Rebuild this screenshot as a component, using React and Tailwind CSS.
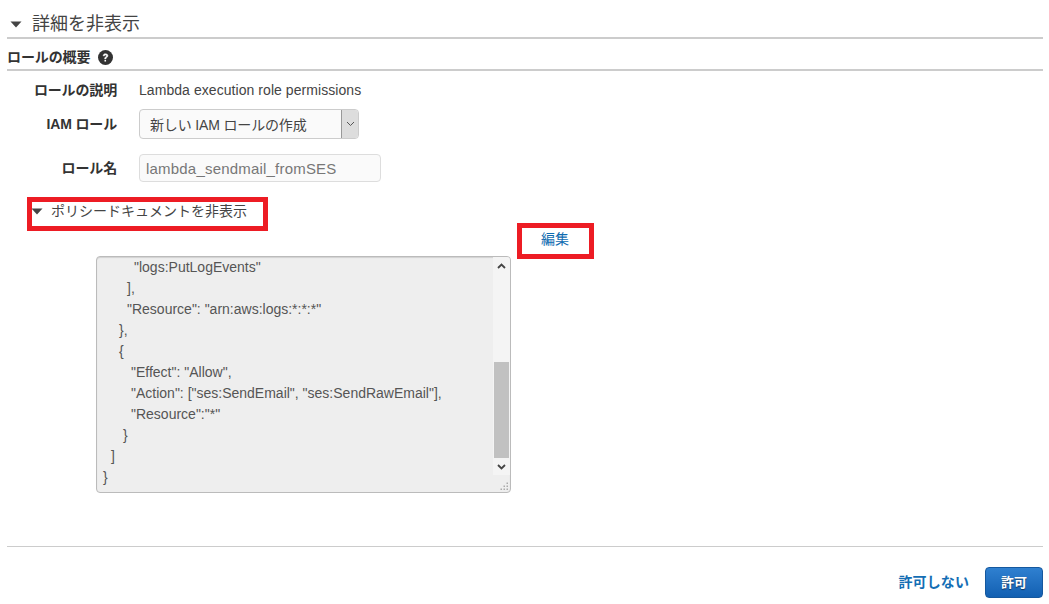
import React from "react";

function Caret({ className }) {
  return (
    <svg viewBox="0 0 12 7" className={className} aria-hidden="true">
      <path d="M0.5 0.5H11.5L6 6.5Z" fill="#444" />
    </svg>
  );
}

function Chevron({ up }) {
  return (
    <svg viewBox="0 0 9 6" className="w-[9px] h-[6px]" aria-hidden="true">
      <path d={up ? "M1 5L4.5 1.5L8 5" : "M1 1L4.5 4.5L8 1"} fill="none" stroke="#444" strokeWidth="1.8" />
    </svg>
  );
}

const lines = [
  ['pl-[31px]', '"logs:PutLogEvents"'],
  ['pl-[24px]', '],'],
  ['pl-[24px]', '"Resource": "arn:aws:logs:*:*:*"'],
  ['pl-[16px]', '},'],
  ['pl-[16px]', '{'],
  ['pl-[28px]', '"Effect": "Allow",'],
  ['pl-[28px]', '"Action": ["ses:SendEmail", "ses:SendRawEmail"],'],
  ['pl-[28px]', '"Resource":"*"'],
  ['pl-[20px]', '}'],
  ['pl-[8px]', ']'],
  ['pl-0', '}'],
];

function Row({ label, children, className }) {
  return (
    <div className={`flex items-center ${className}`}>
      <div className="w-[110px] text-right font-bold text-[14px] text-[#333] tracking-[-0.15px] shrink-0">{label}</div>
      <div className="ml-[22px]">{children}</div>
    </div>
  );
}

export default function App() {
  return (
    <div className="relative w-[1049px] h-[604px] overflow-hidden bg-white pl-[7px] pr-[6px] text-[#444] font-['Liberation_Sans','Noto_Sans_CJK_JP',sans-serif]">
      <div className="flex items-center box-content h-[25px] pt-[12px] border-b-2 border-[#ccc]">
        <Caret className="w-[12px] h-[7px] ml-[3px]" />
        <span className="ml-[10px] text-[18px] leading-[25px] text-[#444]">詳細を非表示</span>
      </div>
      <div className="flex items-center h-[24px] pt-[6px] border-b-2 border-[#ccc] box-content">
        <span className="font-bold text-[14px] text-[#333] tracking-[-0.1px]">ロールの概要</span>
        <svg viewBox="0 0 16 16" className="w-[15px] h-[15px] ml-[8px] mt-[1px]" aria-hidden="true">
          <circle cx="8" cy="8" r="8" fill="#333" />
          <path d="M5.4 6.2C5.5 4.7 6.6 4 8 4c1.5 0 2.6.8 2.6 2.1 0 1.9-2.2 1.9-2.2 3.4H7C7 7.4 9 7.4 9 6.2 9 5.6 8.6 5.3 8 5.3c-.7 0-1.1.4-1.2 1z" fill="#fff" stroke="#fff" strokeWidth=".5" />
          <rect x="6.9" y="10.6" width="1.7" height="1.7" fill="#fff" />
        </svg>
      </div>

      <Row label="ロールの説明" className="mt-[9px] h-[20px]">
        <span className="text-[14px] text-[#444] tracking-[0.06px]">Lambda execution role permissions</span>
      </Row>
      <Row label="IAM ロール" className="mt-[9px] h-[30px]">
        <div className="flex w-[220px] h-[30px] rounded-[4px] border border-[#ccc] overflow-hidden bg-[#fafafa]">
          <span className="flex-1 pl-[10px] text-[14px] leading-[31px] text-[#444] tracking-[-0.15px]">新しい IAM ロールの作成</span>
          <span className="w-[17px] flex items-center justify-center bg-[#ddd] border-l border-[#999]">
            <svg viewBox="0 0 9 6" className="w-[9px] h-[6px]" aria-hidden="true"><path d="M1 1L4.5 4.5L8 1" fill="none" stroke="#555" strokeWidth="1" /></svg>
          </span>
        </div>
      </Row>
      <Row label="ロール名" className="mt-[15px] h-[28px]">
        <div className="w-[242px] h-[28px] rounded-[4px] border border-[#ddd] bg-[#fafafa] pl-[6px] text-[15px] leading-[28px] text-[#777] tracking-[0.2px]">lambda_sendmail_fromSES</div>
      </Row>

      <div className="flex items-center mt-[17px] ml-[24px] h-[24px]">
        <Caret className="w-[12px] h-[7px]" />
        <span className="ml-[8px] text-[14px] text-[#444]">ポリシードキュメントを非表示</span>
      </div>
      <div className="mt-[6px] ml-[534px] text-[14px] leading-[20px] text-[#0f6bb0] w-fit">編集</div>

      <div className="relative mt-[7px] ml-[89px] w-[415px] h-[237px] rounded-[4px] border border-[#bbb] bg-[#eee] overflow-hidden shadow-[inset_0_1px_1px_rgba(0,0,0,0.12)] text-[14px] leading-[21px] text-[#555] pl-[6px]">
        {lines.map(([pl, text], i) => (
          <div key={i} className={`${pl} whitespace-pre`}>{text}</div>
        ))}
        <div className="absolute right-0 top-0 w-[17px] h-[218px] bg-[#f4f4f4] flex flex-col items-center justify-between">
          <div className="h-[17px] flex items-center justify-center"><Chevron up /></div>
          <div className="mt-auto w-[15px] h-[96px] bg-[#c1c1c1]" />
          <div className="h-[17px] flex items-center justify-center"><Chevron /></div>
        </div>
        <svg viewBox="0 0 9 9" className="absolute right-[1px] bottom-[1px] w-[9px] h-[9px]" aria-hidden="true">
          <g fill="#aaa">
            <rect x="6.5" y="0.5" width="1.5" height="1.5" />
            <rect x="3.5" y="3.5" width="1.5" height="1.5" />
            <rect x="6.5" y="3.5" width="1.5" height="1.5" />
            <rect x="0.5" y="6.5" width="1.5" height="1.5" />
            <rect x="3.5" y="6.5" width="1.5" height="1.5" />
            <rect x="6.5" y="6.5" width="1.5" height="1.5" />
          </g>
        </svg>
      </div>

      <div className="mt-[53px] border-t border-[#ccc]" />
      <div className="flex items-center justify-end mt-[20px]">
        <span className="font-bold text-[14px] text-[#146eb4] tracking-[0.1px]">許可しない</span>
        <div className="ml-[16px] w-[58px] h-[31px] rounded-[4px] border border-[#15589e] bg-gradient-to-b from-[#2f80d0] to-[#1260b2] text-white font-bold text-[13px] leading-[30px] text-center [text-shadow:0_1px_1px_rgba(0,0,0,0.5)]">許可</div>
      </div>

      <div className="absolute left-[27px] top-[197px] w-[241px] h-[34px] border-[5px] border-[#ed1c24]" />
      <div className="absolute left-[517px] top-[223px] w-[77px] h-[36px] border-[5px] border-[#ed1c24]" />
    </div>
  );
}
